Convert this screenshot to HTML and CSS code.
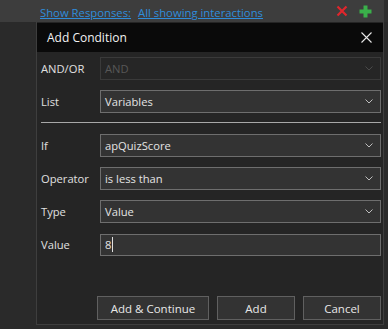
FILE: index.html
```html
<!DOCTYPE html>
<html>
<head>
<meta charset="utf-8">
<link rel="stylesheet" href="styles.css">
</head>
<body>
<div class="topbar">
  <div class="links">
    <a class="link" href="#">Show Responses:</a>
    <a class="link" href="#">All showing interactions</a>
  </div>
  <div class="tools">
    <svg class="ic" width="12" height="12" viewBox="0 0 12 12"><path d="M1.5 1.5 L10.5 10.5 M10.5 1.5 L1.5 10.5" stroke="#e0262c" stroke-width="2.2" fill="none"/></svg>
    <svg class="ic" width="13" height="13" viewBox="0 0 13 13"><path d="M4.5 0.5 H8.5 V4.5 H12.5 V8.5 H8.5 V12.5 H4.5 V8.5 H0.5 V4.5 H4.5 Z" fill="#3ab04a"/></svg>
  </div>
</div>
<div class="stage">
  <div class="dialog">
    <div class="titlebar">
      <span class="title">Add Condition</span>
      <svg class="close" width="11" height="11" viewBox="0 0 11 11"><path d="M0.5 0.5 L10.5 10.5 M10.5 0.5 L0.5 10.5" stroke="#e8e8e8" stroke-width="1.1" fill="none"/></svg>
    </div>
    <div class="body">
      <div class="row">
        <span class="label">AND/OR</span>
        <div class="select disabled"><span>AND</span><svg class="chev" width="8" height="5" viewBox="0 0 8 5"><path d="M0.5 0.5 L4 4 L7.5 0.5" stroke="#4a4a4a" fill="none"/></svg></div>
      </div>
      <div class="row">
        <span class="label">List</span>
        <div class="select"><span>Variables</span><svg class="chev" width="8" height="5" viewBox="0 0 8 5"><path d="M0.5 0.5 L4 4 L7.5 0.5" stroke="#bdbdbd" fill="none"/></svg></div>
      </div>
      <div class="sep"></div>
      <div class="row">
        <span class="label">If</span>
        <div class="select"><span>apQuizScore</span><svg class="chev" width="8" height="5" viewBox="0 0 8 5"><path d="M0.5 0.5 L4 4 L7.5 0.5" stroke="#bdbdbd" fill="none"/></svg></div>
      </div>
      <div class="row">
        <span class="label">Operator</span>
        <div class="select"><span>is less than</span><svg class="chev" width="8" height="5" viewBox="0 0 8 5"><path d="M0.5 0.5 L4 4 L7.5 0.5" stroke="#bdbdbd" fill="none"/></svg></div>
      </div>
      <div class="row">
        <span class="label">Type</span>
        <div class="select"><span>Value</span><svg class="chev" width="8" height="5" viewBox="0 0 8 5"><path d="M0.5 0.5 L4 4 L7.5 0.5" stroke="#bdbdbd" fill="none"/></svg></div>
      </div>
      <div class="row">
        <span class="label">Value</span>
        <div class="input"><span>8</span><span class="caret"></span></div>
      </div>
    </div>
    <div class="buttons">
      <div class="btn wide">Add &amp; Continue</div>
      <div class="btn">Add</div>
      <div class="btn">Cancel</div>
    </div>
  </div>
</div>
</body>
</html>
```
FILE: styles.css
```css
html, body {
  margin: 0;
  padding: 0;
}
body {
  width: 388px;
  height: 329px;
  overflow: hidden;
  background: #2a2a2a;
  font-family: "Open Sans", "Noto Sans", sans-serif;
  font-size: 11.2px;
  color: #e4e4e4;
}
.topbar {
  height: 22px;
  background: #3d3d3d;
  display: flex;
  align-items: center;
  justify-content: space-between;
  padding: 0 12px 0 40px;
  border-right: 4px solid #2e2e2e;
  box-sizing: border-box;
}
.links {
  display: flex;
  gap: 7px;
  margin-top: 3px;
}
.link {
  color: #2f8ddb;
  text-decoration: underline;
  font-size: 11.3px;
}
.tools {
  display: flex;
  align-items: center;
  gap: 11px;
}
.ic {
  display: block;
}
.stage {
  padding-left: 36px;
}
.dialog {
  width: 348px;
  height: 303px;
  box-sizing: border-box;
  border: 1px solid #3e3e3e;
  border-top: none;
  background: #252525;
  display: flex;
  flex-direction: column;
}
.titlebar {
  height: 29px;
  background: #0a0a0a;
  display: flex;
  align-items: center;
  justify-content: space-between;
  padding: 0 11px 0 10px;
  margin-top: 1px;
}
.title {
  font-size: 12px;
  color: #f2f2f2;
}
.close {
  display: block;
}
.body {
  padding: 5px 2px 0 4px;
  display: flex;
  flex-direction: column;
}
.row {
  display: grid;
  grid-template-columns: 59px 1fr;
  align-items: center;
  height: 23px;
  margin-bottom: 10px;
}
.label {
  font-size: 11.2px;
  color: #e0e0e0;
}
.select, .input {
  height: 23px;
  box-sizing: border-box;
  border: 1px solid #6e6e6e;
  background: #333333;
  display: flex;
  align-items: center;
  justify-content: space-between;
  padding: 0 7px 0 4px;
}
.select.disabled {
  border-color: #3a3a3a;
  background: #262626;
  color: #575757;
}
.chev {
  display: block;
}
.input {
  justify-content: flex-start;
  height: 22px;
}
.caret {
  width: 1px;
  height: 15px;
  background: #e0e0e0;
  margin-left: 1px;
}
.sep {
  height: 1px;
  background: #a8a8a8;
  margin: -1px 0 11px 0;
}
.buttons {
  margin-top: auto;
  margin-bottom: 4px;
  display: flex;
  justify-content: flex-end;
  gap: 8px;
  padding-right: 2px;
}
.btn {
  width: 78px;
  height: 24px;
  box-sizing: border-box;
  border: 1px solid #606060;
  background: #333333;
  display: flex;
  align-items: center;
  justify-content: center;
  font-size: 11.5px;
  color: #e8e8e8;
}
.btn.wide {
  width: 112px;
}
```
